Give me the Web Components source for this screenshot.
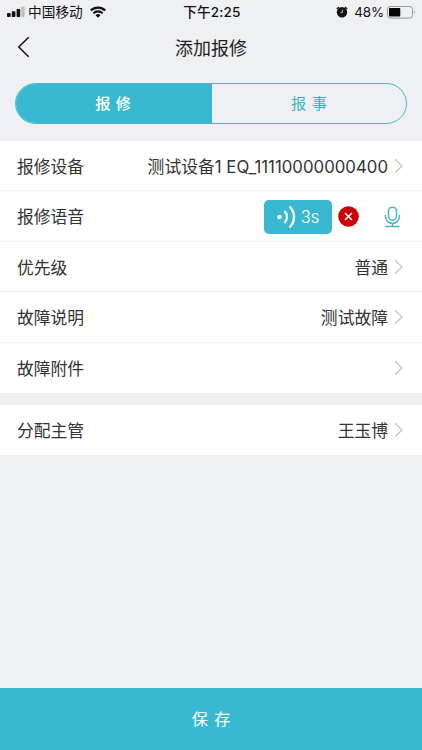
<!DOCTYPE html>
<html lang="zh-CN">
<head>
<meta charset="utf-8">
<title>添加报修</title>
<style>
html,body{margin:0;height:100%}
body{background:#eff0f3;font-family:Inter,"Noto Sans CJK SC",sans-serif;color:#333;overflow:hidden}
</style>
</head>
<body>
<repair-page></repair-page>
<script>
const define = (name, html) => customElements.define(name, class extends HTMLElement {
  constructor() {
    super();
    const t = document.createElement('template');
    t.innerHTML = html;
    this.attachShadow({mode: 'open'}).append(t.content.cloneNode(true));
  }
});

define('status-bar', `
<style>
:host{display:grid;grid-template-columns:1fr auto 1fr;align-items:center;height:24px;color:#111;font-size:13.7px;line-height:24px;white-space:nowrap}
.left,.right{display:flex;align-items:center}
.left{padding-left:7px}
.right{justify-content:flex-end;padding-right:6px}
.time{font-weight:500;font-size:13.6px;letter-spacing:.15px;margin-left:2px}
svg{display:block;flex:none}
.carrier{margin:0 7px 0 3px}
.pct{margin:0 3px 0 6px;font-size:13.4px;letter-spacing:-.1px}
</style>
<div class="left">
<svg width="18" height="12" viewBox="0 0 18 12"><g fill="#111"><rect y="7" width="3.6" height="4" rx=".8"/><rect x="4.8" y="5.2" width="3.6" height="5.8" rx=".8"/><rect x="9.6" y="3" width="3.6" height="8" rx=".8"/></g><rect x="14.2" y=".5" width="3.5" height="10.5" rx=".8" fill="#bfc0c3"/></svg>
<span class="carrier">中国移动</span>
<svg width="16" height="12" viewBox="0 0 16 12" fill="none" stroke="#111" stroke-width="2.1"><path d="M.8 4.6a10.2 10.2 0 0 1 14.4 0M3.4 7.3a6.5 6.5 0 0 1 9.2 0"/><path d="M5.5 9.2a3.5 3.5 0 0 1 5 0L8 11.8z" fill="#111" stroke="none"/></svg>
</div>
<span class="time">下午2:25</span>
<div class="right">
<svg width="12" height="12" viewBox="0 0 12 12"><circle cx="6" cy="6.2" r="5.2" fill="#111"/><path d="M.8 3 3.1 1M11.2 3 8.9 1" stroke="#111" stroke-width="1.3"/><path d="M6.3 3.6v3H4.6" fill="none" stroke="#eff0f3" stroke-width=".8"/></svg>
<span class="pct">48%</span>
<svg width="29" height="13" viewBox="0 0 29 13"><rect x=".5" y=".5" width="25" height="11.6" rx="2.7" fill="none" stroke="#96989b"/><rect x="2" y="2" width="11.3" height="8.6" rx="1" fill="#050505"/><path d="M27.2 4.5q1.7 1.8 0 3.6z" fill="#96989b"/></svg>
</div>`);

define('title-bar', `
<style>
:host{display:grid;grid-template-columns:50px 1fr 50px;align-items:center;height:46px;color:#1c1c1c;font-size:18px;text-align:center}
svg{display:block;margin-left:17px}
span{padding-top:4px;line-height:42px}
</style>
<svg width="14" height="22" viewBox="0 0 14 22" fill="none" stroke="#111" stroke-width="1.5"><path d="M11.7 1.3 1.8 11l9.9 9.7"/></svg>
<span><slot></slot></span>`);

define('segment-tabs', `
<style>
:host{display:grid;grid-template-columns:196px 1fr;box-sizing:border-box;height:41px;margin:13px 15px 17px;border:1px solid #4bb6c8;border-radius:21px;overflow:hidden;font-size:15.2px;line-height:40px;text-align:center;word-spacing:1.3px}
.on{background:#39b9d1;color:#fff;font-weight:500;padding-right:2px}
.off{color:#3bb2c6}
</style>
<div class="on"><slot name="on"></slot></div><div class="off"><slot name="off"></slot></div>`);

define('chevron-icon', `
<style>:host{display:block;width:10px;height:16px}svg{display:block}</style>
<svg width="10" height="16" viewBox="0 0 10 16" fill="none" stroke="#c5c5c7" stroke-width="1.3"><path d="M1.2 1.2 8 8l-6.8 6.8"/></svg>`);

define('form-row', `
<style>
:host{display:flex;box-sizing:border-box;height:51px;align-items:center;padding:0 18px 0 17px;border-bottom:1px solid #f0f0f2;background:#fff;font-size:16.8px;line-height:48px;white-space:nowrap}
:host([short]){height:50px}
:host([last]){border-bottom:0}
.label,::slotted(span){padding-top:2px}
.value{margin-left:auto;display:flex;align-items:center;gap:6px}
</style>
<span class="label"><slot name="label"></slot></span><div class="value"><slot></slot></div>`);

define('device-code', `
<style>:host{display:block;padding-top:2px}.code{letter-spacing:.01px}</style>
测试设备<span class="code"><slot></slot></span>`);

define('voice-clip', `
<style>
:host{display:flex;align-items:center;margin-right:3px;padding-top:1px}
.clip{display:flex;align-items:center;justify-content:center;box-sizing:border-box;width:68px;height:34px;border-radius:5px;background:#39b9d1;color:#fff;font-size:16.6px;font-weight:300;line-height:34px;gap:5px}
svg{display:block}
.del{margin:0 25px 0 6px}
</style>
<div class="clip"><svg width="19" height="24" viewBox="0 0 19 24" fill="none" stroke="#fff" stroke-width="2.3" stroke-linecap="round"><circle cx="2.6" cy="12" r="2.2" fill="#fff" stroke="none"/><path d="M8 6.8a8.2 8.2 0 0 1 0 10.4M13.2 2.2a14.6 14.6 0 0 1 0 19.6"/></svg><span><slot></slot></span></div>
<svg class="del" width="21" height="21" viewBox="0 0 21 21"><circle cx="10.5" cy="10.5" r="10.3" fill="#c90006"/><path d="m7 7 7 7m0-7-7 7" stroke="#fff" stroke-width="1.5"/></svg>
<svg width="17" height="22" viewBox="0 0 17 22" fill="none" stroke="#49b5c9" stroke-width="1.5"><rect x="4.5" y="1.2" width="8" height="13" rx="4"/><path d="M1.5 9v1.4a7 7 0 0 0 14 0V9M8.5 17.4v3M1.5 20.4h14"/></svg>`);

define('save-button', `
<style>:host{display:block;height:62px;margin-top:auto;background:#39b9d1;color:#fff;text-align:center;font-size:16.2px;line-height:62px;word-spacing:1.8px}</style>
<slot></slot>`);

define('repair-page', `
<style>
:host{display:flex;flex-direction:column;height:100vh}
.group+.group{margin-top:12px}
</style>
<status-bar></status-bar>
<title-bar>添加报修</title-bar>
<segment-tabs><span slot="on">报 修</span><span slot="off">报 事</span></segment-tabs>
<div class="group">
<form-row short><span slot="label">报修设备</span><device-code>1 EQ_11110000000400</device-code><chevron-icon></chevron-icon></form-row>
<form-row><span slot="label">报修语音</span><voice-clip>3s</voice-clip></form-row>
<form-row short><span slot="label">优先级</span><span>普通</span><chevron-icon></chevron-icon></form-row>
<form-row><span slot="label">故障说明</span><span>测试故障</span><chevron-icon></chevron-icon></form-row>
<form-row short last><span slot="label">故障附件</span><chevron-icon></chevron-icon></form-row>
</div>
<div class="group">
<form-row short last><span slot="label">分配主管</span><span>王玉博</span><chevron-icon></chevron-icon></form-row>
</div>
<save-button>保 存</save-button>`);
</script>
</body>
</html>
